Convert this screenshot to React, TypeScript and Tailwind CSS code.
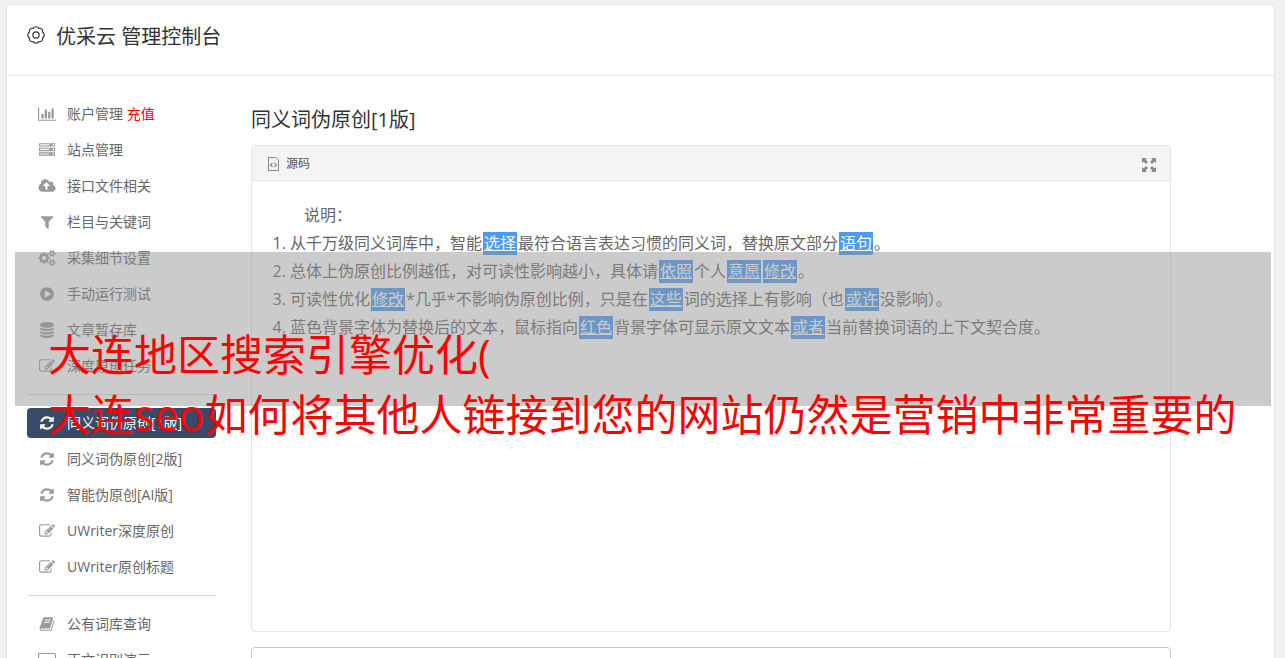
import React from 'react';

interface GlyphProps {
  path: string;
  width?: number;
}

interface MenuEntry {
  label: string;
  icon: GlyphProps;
  tag?: string;
  active?: boolean;
}

const ICONS: Record<string, GlyphProps> = {
  chart: {
    width: 2048,
    path: 'M640 896v512h-256v-512h256zm384-512v1024h-256v-1024h256zm1024 1152v128h-2048v-1536h128v1408h1920zm-640-896v768h-256v-768h256zm384-384v1152h-256v-1152h256z',
  },
  server: {
    path: 'M128 1408h1024v-128h-1024v128zm0-512h1024v-128h-1024v128zm1568 448q0-40-28-68t-68-28-68 28-28 68 28 68 68 28 68-28 28-68zm-1568-960h1024v-128h-1024v128zm1568 448q0-40-28-68t-68-28-68 28-28 68 28 68 68 28 68-28 28-68zm0-512q0-40-28-68t-68-28-68 28-28 68 28 68 68 28 68-28 28-68zm96 832v384h-1792v-384h1792zm0-512v384h-1792v-384h1792zm0-512v384h-1792v-384h1792z',
  },
  upload: {
    width: 1920,
    path: 'M1280 864q0-14-9-23l-352-352q-9-9-23-9t-23 9l-351 351q-10 12-10 24 0 14 9 23t23 9h224v352q0 13 9.5 22.5t22.5 9.5h192q13 0 22.5-9.5t9.5-22.5v-352h224q13 0 22.5-9.5t9.5-22.5zm640 288q0 159-112.5 271.5t-271.5 112.5h-1088q-185 0-316.5-131.5t-131.5-316.5q0-130 70-240t188-165q-2-30-2-43 0-212 150-362t362-150q156 0 285.5 87t188.5 231q71-62 166-62 106 0 181 75t75 181q0 76-41 138 130 31 213.5 135.5t83.5 238.5z',
  },
  filter: {
    path: 'M1595 295q17 41-14 70l-493 493v742q0 42-39 59-13 5-25 5-27 0-45-19l-256-256q-19-19-19-45v-486l-493-493q-31-29-14-70 17-39 59-39h1280q42 0 59 39z',
  },
  cogs: {
    width: 1920,
    path: 'M896 896q0-106-75-181t-181-75-181 75-75 181 75 181 181 75 181-75 75-181zm768 512q0-52-38-90t-90-38-90 38-38 90q0 53 37.5 90.5t90.5 37.5 90.5-37.5 37.5-90.5zm0-1024q0-52-38-90t-90-38-90 38-38 90q0 53 37.5 90.5t90.5 37.5 90.5-37.5 37.5-90.5zm-384 421v185q0 10-7 19.5t-16 10.5l-155 24q-11 35-32 76 34 48 90 115 7 11 7 20 0 12-7 19-23 30-82.5 89.5t-78.5 59.5q-11 0-21-7l-115-90q-37 19-77 31-11 108-23 155-7 24-30 24h-186q-11 0-20-7.5t-10-17.5l-23-153q-34-10-75-31l-118 89q-7 7-20 7-11 0-21-8-144-133-144-160 0-9 7-19 10-14 41-53t47-61q-23-44-35-82l-152-24q-10-1-17-9.5t-7-19.5v-185q0-10 7-19.5t16-10.5l155-24q11-35 32-76-34-48-90-115-7-11-7-20 0-12 7-20 22-30 82-89t79-59q11 0 21 7l115 90q34-18 77-32 11-108 23-154 7-24 30-24h186q11 0 20 7.5t10 17.5l23 153q34 10 75 31l118-89q8-7 20-7 11 0 21 8 144 133 144 160 0 8-7 19-12 16-42 54t-45 60q23 48 34 82l152 23q10 2 17 10.5t7 19.5zm640 533v140q0 16-149 31-12 27-30 52 51 113 51 138 0 4-4 7-122 71-124 71-8 0-46-47t-52-68q-20 2-30 2t-30-2q-14 21-52 68t-46 47q-2 0-124-71-4-3-4-7 0-25 51-138-18-25-30-52-149-15-149-31v-140q0-16 149-31 13-29 30-52-51-113-51-138 0-4 4-7 4-2 35-20t59-34 30-16q8 0 46 46.5t52 67.5q20-2 30-2t30 2q51-71 92-112l6-2q4 0 124 70 4 3 4 7 0 25-51 138 17 23 30 52 149 15 149 31zm0-1024v140q0 16-149 31-12 27-30 52 51 113 51 138 0 4-4 7-122 71-124 71-8 0-46-47t-52-68q-20 2-30 2t-30-2q-14 21-52 68t-46 47q-2 0-124-71-4-3-4-7 0-25 51-138-18-25-30-52-149-15-149-31v-140q0-16 149-31 13-29 30-52-51-113-51-138 0-4 4-7 4-2 35-20t59-34 30-16q8 0 46 46.5t52 67.5q20-2 30-2t30 2q51-71 92-112l6-2q4 0 124 70 4 3 4 7 0 25-51 138 17 23 30 52 149 15 149 31z',
  },
  play: {
    path: 'M896 128q209 0 385.5 103t279.5 279.5 103 385.5-103 385.5-279.5 279.5-385.5 103-385.5-103-279.5-279.5-103-385.5 103-385.5 279.5-279.5 385.5-103zm384 823q32-18 32-55t-32-55l-544-320q-31-19-64-1-32 19-32 56v640q0 37 32 56 16 8 32 8 17 0 32-9z',
  },
  database: {
    path: 'M896 768q237 0 443-43t325-127v170q0 69-103 128t-280 93.5-385 34.5-385-34.5-280-93.5-103-128v-170q119 84 325 127t443 43zm0 768q237 0 443-43t325-127v170q0 69-103 128t-280 93.5-385 34.5-385-34.5-280-93.5-103-128v-170q119 84 325 127t443 43zm0-384q237 0 443-43t325-127v170q0 69-103 128t-280 93.5-385 34.5-385-34.5-280-93.5-103-128v-170q119 84 325 127t443 43zm0-1152q208 0 385 34.5t280 93.5 103 128v128q0 69-103 128t-280 93.5-385 34.5-385-34.5-280-93.5-103-128v-128q0-69 103-128t280-93.5 385-34.5z',
  },
  edit: {
    path: 'M888 1184l116-116-152-152-116 116v56h96v96h56zm440-720q-16-16-33 1l-350 350q-17 17-1 33t33-1l350-350q17-17 1-33zm80 594v190q0 119-84.5 203.5t-203.5 84.5h-832q-119 0-203.5-84.5t-84.5-203.5v-832q0-119 84.5-203.5t203.5-84.5h832q63 0 117 25 15 7 18 23 3 17-9 29l-49 49q-14 14-32 8-23-6-45-6h-832q-66 0-113 47t-47 113v832q0 66 47 113t113 47h832q66 0 113-47t47-113v-126q0-13 9-22l64-64q15-15 35-7t20 29zm-96-738l288 288-672 672h-288v-288zm444 132l-92 92-288-288 92-92q28-28 68-28t68 28l152 152q28 28 28 68t-28 68z',
  },
  refresh: {
    path: 'M1639 1056q0 5-1 7-64 268-268 434.5t-478 166.5q-146 0-282.5-55t-243.5-157l-129 129q-19 19-45 19t-45-19-19-45v-448q0-26 19-45t45-19h448q26 0 45 19t19 45-19 45l-137 137q71 66 161 102t187 36q134 0 250-65t186-179q11-17 53-117 8-23 30-23h192q13 0 22.5 9.5t9.5 22.5zm25-800v448q0 26-19 45t-45 19h-448q-26 0-45-19t-19-45 19-45l138-138q-148-137-349-137-134 0-250 65t-186 179q-11 17-53 117-8 23-30 23h-199q-13 0-22.5-9.5t-9.5-22.5v-7q65-268 270-434.5t480-166.5q146 0 284 55.5t245 156.5l130-129q19-19 45-19t45 19 19 45z',
  },
  book: {
    path: 'M1703 478q40 57 18 129l-275 906q-19 64-76.5 107.5t-122.5 43.5h-923q-77 0-148.5-53.5t-99.5-131.5q-24-67-2-127 0-4 3-27t4-37q1-8-3-21.5t-3-19.5q2-11 8-21t16.5-23.5 16.5-23.5q23-38 45-91.5t30-91.5q3-10 .5-30t-.5-28q3-11 17-28t17-23q21-36 42-92t25-90q1-9-2.5-32t.5-28q4-13 22-30.5t22-22.5q19-26 42.5-84.5t27.5-96.5q1-8-3-25.5t-2-26.5q2-8 9-18t18-23 17-21q8-12 16.5-30.5t15-35 16-36 19.5-32 26.5-23.5 36-11.5 47.5 5.5l-1 3q38-9 51-9h761q74 0 114 56t18 130l-274 906q-36 119-71.5 153.5t-128.5 34.5h-869q-27 0-38 15-11 16-1 43 24 70 144 70h923q29 0 56-15.5t35-41.5l300-987q7-22 5-57 38 15 59 43zm-1064 2q-4 13 2 22.5t20 9.5h608q13 0 25.5-9.5t16.5-22.5l21-64q4-13-2-22.5t-20-9.5h-608q-13 0-25.5 9.5t-16.5 22.5zm-83 256q-4 13 2 22.5t20 9.5h608q13 0 25.5-9.5t16.5-22.5l21-64q4-13-2-22.5t-20-9.5h-608q-13 0-25.5 9.5t-16.5 22.5z',
  },
  screen: {
    width: 2048,
    path: 'M160 96h1728q66 0 113 47t47 113v1088q0 66-47 113t-113 47h-736v128h352v128h-960v-128h352v-128h-736q-66 0-113-47t-47-113v-1088q0-66 47-113t113-47zm0 128q-32 0-32 32v1088q0 32 32 32h1728q32 0 32-32v-1088q0-32-32-32z',
  },
};

const MENU: MenuEntry[][] = [
  [
    { label: '账户管理', icon: ICONS.chart, tag: '充值' },
    { label: '站点管理', icon: ICONS.server },
    { label: '接口文件相关', icon: ICONS.upload },
    { label: '栏目与关键词', icon: ICONS.filter },
    { label: '采集细节设置', icon: ICONS.cogs },
    { label: '手动运行测试', icon: ICONS.play },
    { label: '文章暂存库', icon: ICONS.database },
    { label: '深度原创任务', icon: ICONS.edit },
  ],
  [
    { label: '同义词伪原创[1版]', icon: ICONS.refresh, active: true },
    { label: '同义词伪原创[2版]', icon: ICONS.refresh },
    { label: '智能伪原创[AI版]', icon: ICONS.refresh },
    { label: 'UWriter深度原创', icon: ICONS.edit },
    { label: 'UWriter原创标题', icon: ICONS.edit },
  ],
  [
    { label: '公有词库查询', icon: ICONS.book },
    { label: '正文识别演示', icon: ICONS.screen },
  ],
];

function Glyph({ path, width = 1792 }: GlyphProps) {
  return (
    <svg viewBox={`0 0 ${width} 1792`} className="h-4 w-[18px] shrink-0" fill="currentColor" fillRule="evenodd" aria-hidden="true">
      <path d={path} />
    </svg>
  );
}

function GearIcon() {
  return (
    <svg viewBox="0 0 18 18" className="h-[18px] w-[18px] shrink-0" fill="none" stroke="#333" strokeWidth="1.2" strokeLinejoin="round" aria-hidden="true">
      <path d="M6.240 2.350A3.200 3.200 0 0 1 11.760 2.350A3.200 3.200 0 0 1 15.650 6.240A3.200 3.200 0 0 1 15.650 11.760A3.200 3.200 0 0 1 11.760 15.650A3.200 3.200 0 0 1 6.240 15.650A3.200 3.200 0 0 1 2.350 11.760A3.200 3.200 0 0 1 2.350 6.240A3.200 3.200 0 0 1 6.240 2.350Z" />
      <circle cx="9" cy="9" r="3.100" />
    </svg>
  );
}

function Swap({ children }: { children: React.ReactNode }) {
  return <a href="#" className="mx-px bg-[#499bf4] px-px pb-px text-white underline">{children}</a>;
}

function Sidebar() {
  return (
    <nav className="w-[189px] shrink-0 text-sm text-[#666]">
      {MENU.map((group, i) => (
        <div key={i}>
          {i > 0 && <hr className="my-[13px] border-[#dcdcdc]" />}
          <ul className="flex flex-col gap-[6px]">
            {group.map((item) => (
              <li key={item.label}>
                <a
                  href="#"
                  className={
                    item.active
                      ? 'flex h-[30px] items-center gap-[11px] rounded bg-[#384b68] pl-[11px] text-white'
                      : 'flex h-[30px] items-center gap-[11px] pl-[11px]'
                  }
                >
                  <span className={item.active ? 'text-white' : 'text-[#999]'}>
                    <Glyph {...item.icon} />
                  </span>
                  <span>
                    {item.label}
                    {item.tag && <span className="text-[#f00]"> {item.tag}</span>}
                  </span>
                </a>
              </li>
            ))}
          </ul>
        </div>
      ))}
    </nav>
  );
}

function SourcePanel() {
  return (
    <section className="rounded border border-[#e4e4e4] bg-white">
      <div className="flex h-[35px] items-center justify-between rounded-t border-b border-[#e4e4e4] bg-[#f4f4f4] pr-[14px] pl-4">
        <h3 className="flex items-center gap-[7px] pt-[2px] text-xs text-[#555]">
          <svg viewBox="0 0 11 14" className="h-[14px] w-[11px]" fill="none" stroke="#888" aria-hidden="true">
            <path d="M.5.5H8L10.500 3V13.500H.5Z" />
            <path d="M4.500 6L2.500 8L4.500 10M6.500 6L8.500 8L6.500 10" strokeWidth="1.2" />
          </svg>
          源码
        </h3>
        <button type="button" aria-label="全屏" className="mt-1">
          <svg viewBox="0 0 14 14" className="h-[14px] w-[14px]" fill="#888" aria-hidden="true">
            <path d="M0 0H5L3.500 1.500L6 4L4 6L1.500 3.500L0 5ZM14 0V5L12.500 3.500L10 6L8 4L10.500 1.500L9 0ZM0 14V9L1.500 10.500L4 8L6 10L3.500 12.500L5 14ZM14 14H9L10.500 12.500L8 10L10 8L12.500 10.500L14 9Z" />
          </svg>
        </button>
      </div>
      <div className="min-h-[450px] px-5 pt-5 text-base leading-7 text-[#666]">
        <p className="pl-8">说明：</p>
        <ol className="list-decimal pl-[18px]">
          <li>
            从千万级同义词库中，智能<Swap>选择</Swap>最符合语言表达习惯的同义词，替换原文部分<Swap>语句</Swap>。
          </li>
          <li>
            总体上伪原创比例越低，对可读性影响越小，具体请<Swap>依照</Swap>个人<Swap>意愿</Swap><Swap>修改</Swap>。
          </li>
          <li>
            可读性优化<Swap>修改</Swap>*几乎*不影响伪原创比例，只是在<Swap>这些</Swap>词的选择上有影响（也<Swap>或许</Swap>没影响）。
          </li>
          <li>
            蓝色背景字体为替换后的文本，鼠标指向<Swap>红色</Swap>背景字体可显示原文文本<Swap>或者</Swap>当前替换词语的上下文契合度。
          </li>
        </ol>
      </div>
    </section>
  );
}

export default function App() {
  return (
    <div className="relative h-screen overflow-hidden bg-[#f0f0f0] pt-1 pr-[10px] pl-[6px] font-['Open_Sans','Noto_Sans_CJK_SC',sans-serif]">
      <div className="min-h-full rounded border border-[#e4e4e4] bg-white">
        <header className="flex h-[71px] items-start gap-[11px] border-b border-[#e4e4e4] pt-4 pl-5">
          <span className="pt-[5px]">
            <GearIcon />
          </span>
          <h1 className="text-xl leading-8 text-[#333]">优采云 管理控制台</h1>
        </header>
        <div className="flex gap-[35px] pt-[23px] pr-[103px] pl-5">
          <Sidebar />
          <main className="min-w-0 flex-1 pt-[5px]">
            <h2 className="mb-[9px] text-xl leading-8 text-[#333]">同义词伪原创[1版]</h2>
            <SourcePanel />
            <section className="mt-[15px] h-[200px] rounded border border-[#c8c8c8] bg-white" />
          </main>
        </div>
      </div>

      {/* Title banner over the page */}
      <div className="absolute top-[252px] right-[14px] left-[15px] h-[154px] bg-[#929292]/48 pt-[73px] pl-[33px]">
        <p className="text-[43px] leading-[60px] whitespace-nowrap text-[#f00]">
          大连地区搜索引擎优化(
          <br />
          大连seo如何将其他人链接到您的网站仍然是营销中非常重要的
        </p>
      </div>
    </div>
  );
}
